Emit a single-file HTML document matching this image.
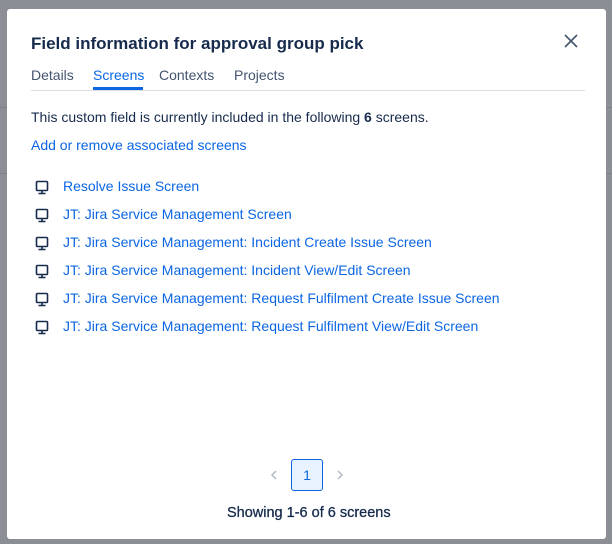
<!DOCTYPE html>
<html><head><style>
body{margin:0;width:612px;height:544px;background:#8b8e94;position:relative;overflow:hidden;font-family:"Liberation Sans",sans-serif;}
.l1{position:absolute;left:0;right:0;top:107px;height:1px;background:#7c7f85}
.l2{position:absolute;left:0;right:0;top:173px;height:1px;background:#7c7f85}
.m{position:absolute;left:7px;top:9px;width:599px;height:530px;background:#fff;border-radius:3px}
.t{position:absolute;left:24px;top:25px;font-size:17px;font-weight:bold;color:#172b4d}
.x{position:absolute;left:557px;top:25px}
.tabs{position:absolute;left:24px;top:58px;font-size:14px;color:#44546f}
.tabs span{position:absolute;white-space:nowrap}
.ul{position:absolute;left:86px;top:78px;width:50px;height:3px;background:#0c66e4}
.hr{position:absolute;left:24px;top:81px;width:554px;height:1px;background:#dcdfe4}
.p{position:absolute;left:24px;top:100px;font-size:14px;color:#172b4d}
.a{position:absolute;left:24px;top:128px;font-size:14px;color:#0c66e4}
.r{position:absolute;left:28px;font-size:14px;color:#0c66e4;height:20px}
.r svg{position:absolute;left:0;top:2px}
.r span{position:absolute;left:28px;top:0;white-space:nowrap}
.s{position:absolute;font-size:14px;color:#172b4d}
</style></head><body>
<div class="l1"></div><div class="l2"></div>
<div class="m">
<div class="t">Field information for approval group pick</div>
<svg class="x" width="14" height="14" viewBox="0 0 14 14"><path d="M1 1L13 13M13 1L1 13" stroke="#44546f" stroke-width="1.6"/></svg>
<div class="tabs"><span style="left:0;top:0">Details</span><span style="left:62px;top:0;color:#0c66e4">Screens</span><span style="left:128px;top:0">Contexts</span><span style="left:203px;top:0">Projects</span></div>
<div class="ul"></div><div class="hr"></div>
<div class="p">This custom field is currently included in the following <b>6</b> screens.</div>
<div class="a">Add or remove associated screens</div>
<div class="r" style="top:169px"><svg width="14" height="16" viewBox="0 0 14 16"><rect x="1.5" y="1.5" width="11" height="9" rx="1" fill="none" stroke="#172b4d" stroke-width="1.6"/><path d="M7 10.5v3M3.5 13.5h7" stroke="#172b4d" stroke-width="1.6"/></svg><span>Resolve Issue Screen</span></div>
<div class="r" style="top:197px"><svg width="14" height="16" viewBox="0 0 14 16"><rect x="1.5" y="1.5" width="11" height="9" rx="1" fill="none" stroke="#172b4d" stroke-width="1.6"/><path d="M7 10.5v3M3.5 13.5h7" stroke="#172b4d" stroke-width="1.6"/></svg><span>JT: Jira Service Management Screen</span></div>
<div class="r" style="top:225px"><svg width="14" height="16" viewBox="0 0 14 16"><rect x="1.5" y="1.5" width="11" height="9" rx="1" fill="none" stroke="#172b4d" stroke-width="1.6"/><path d="M7 10.5v3M3.5 13.5h7" stroke="#172b4d" stroke-width="1.6"/></svg><span>JT: Jira Service Management: Incident Create Issue Screen</span></div>
<div class="r" style="top:253px"><svg width="14" height="16" viewBox="0 0 14 16"><rect x="1.5" y="1.5" width="11" height="9" rx="1" fill="none" stroke="#172b4d" stroke-width="1.6"/><path d="M7 10.5v3M3.5 13.5h7" stroke="#172b4d" stroke-width="1.6"/></svg><span>JT: Jira Service Management: Incident View/Edit Screen</span></div>
<div class="r" style="top:281px"><svg width="14" height="16" viewBox="0 0 14 16"><rect x="1.5" y="1.5" width="11" height="9" rx="1" fill="none" stroke="#172b4d" stroke-width="1.6"/><path d="M7 10.5v3M3.5 13.5h7" stroke="#172b4d" stroke-width="1.6"/></svg><span>JT: Jira Service Management: Request Fulfilment Create Issue Screen</span></div>
<div class="r" style="top:309px"><svg width="14" height="16" viewBox="0 0 14 16"><rect x="1.5" y="1.5" width="11" height="9" rx="1" fill="none" stroke="#172b4d" stroke-width="1.6"/><path d="M7 10.5v3M3.5 13.5h7" stroke="#172b4d" stroke-width="1.6"/></svg><span>JT: Jira Service Management: Request Fulfilment View/Edit Screen</span></div>
</div>
<svg style="position:absolute;left:270px;top:470px" width="8" height="10" viewBox="0 0 8 10"><path d="M6 1L2 5L6 9" fill="none" stroke="#b3b9c4" stroke-width="1.5"/></svg>
<div style="position:absolute;left:291px;top:459px;width:32px;height:32px;border:1px solid #0c66e4;border-radius:3px;background:#e9f2ff;color:#0c66e4;font-size:14px;text-align:center;line-height:30px;box-sizing:border-box">1</div>
<svg style="position:absolute;left:336px;top:470px" width="8" height="10" viewBox="0 0 8 10"><path d="M2 1L6 5L2 9" fill="none" stroke="#b3b9c4" stroke-width="1.5"/></svg>
<div class="s" style="left:227px;top:505px;font-size:14.5px;-webkit-text-stroke:0.3px #172b4d">Showing 1-6 of 6 screens</div>
</body></html>
